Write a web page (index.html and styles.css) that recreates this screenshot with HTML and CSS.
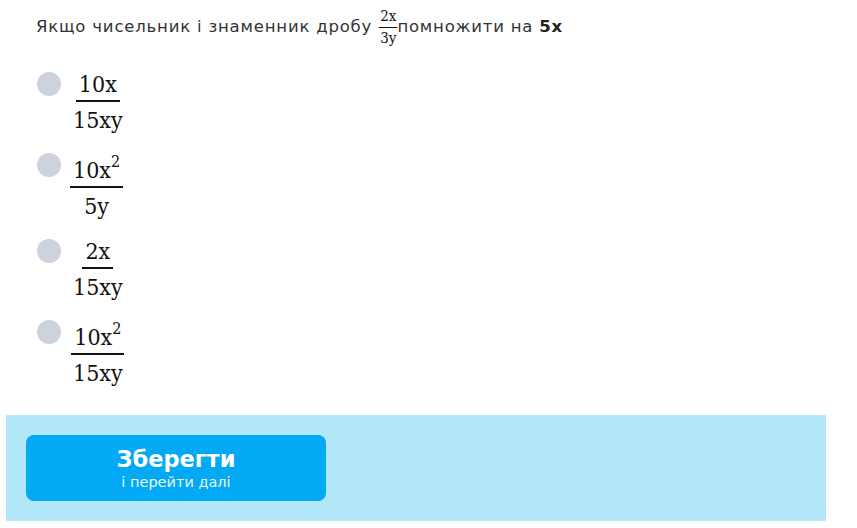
FILE: index.html
```html
<!DOCTYPE html>
<html lang="uk">
<head>
  <meta charset="UTF-8" />
  <meta name="viewport" content="width=device-width, initial-scale=1" />
  <title>Тест</title>
  <link rel="stylesheet" href="styles.css">
</head>
<body>
  <div class="card">
    <div class="question">
      Якщо чисельник і знаменник дробу
      <span class="frac small"><span class="num">2x</span><span class="den">3y</span></span>помножити на <b>5x</b>
    </div>

    <div class="answers">
      <label class="answer">
        <span class="radio"></span>
        <span class="frac"><span class="num">10x</span><span class="den">15xy</span></span>
      </label>
      <label class="answer">
        <span class="radio"></span>
        <span class="frac"><span class="num">10x<sup>2</sup></span><span class="den">5y</span></span>
      </label>
      <label class="answer">
        <span class="radio"></span>
        <span class="frac"><span class="num">2x</span><span class="den">15xy</span></span>
      </label>
      <label class="answer">
        <span class="radio"></span>
        <span class="frac"><span class="num">10x<sup>2</sup></span><span class="den">15xy</span></span>
      </label>
    </div>

    <div class="footer">
      <button class="save">
        <span class="save-title">Зберегти</span>
        <span class="save-sub">і перейти далі</span>
      </button>
    </div>
  </div>
</body>
</html>
```

FILE: styles.css
```css
body {
  margin: 0 31px 7px 6px;
  background-color: #fff;
  font-family: 'DejaVu Sans', sans-serif;
  color: #333;
}
.card {
  width: 820px;
  background-color: #fff;
  box-shadow: 0 0 22px rgba(3, 169, 244, 0.16);
}
.question {
  padding: 8px 30px 0 30px;
  font-size: 16.5px;
  line-height: 24px;
  letter-spacing: 0.8px;
}
.question b {
  font-weight: 700;
  color: #222;
}
.frac {
  display: inline-flex;
  flex-direction: column;
  align-items: center;
  font-family: 'DejaVu Serif Condensed', 'Liberation Serif', serif;
  font-size: 23px;
  line-height: 24px;
  letter-spacing: 0;
  color: #111;
}
.frac .num {
  padding: 0 3px 4px;
  border-bottom: 2px solid #111;
}
.frac .den {
  padding: 6px 3px 0;
}
.frac sup {
  font-size: 16px;
  line-height: 18px;
  vertical-align: 11px;
}
.frac.small {
  font-size: 15px;
  line-height: 16px;
  vertical-align: middle;
  margin-left: 1px;
}
.frac.small .num {
  padding: 0 1px 3px;
  border-bottom-width: 1px;
}
.frac.small .den {
  padding: 2px 1px 0;
}
.answers {
  display: flex;
  flex-direction: column;
  gap: 21px;
  padding: 26px 31px 30px;
}
.answer {
  display: flex;
  align-items: flex-start;
  gap: 9px;
  cursor: pointer;
}
.radio {
  width: 24px;
  height: 24px;
  border-radius: 50%;
  background-color: #ccd3dc;
  flex-shrink: 0;
}
.footer {
  background-color: #b3e8fb;
  padding: 20px;
}
.save {
  width: 300px;
  height: 66px;
  display: flex;
  flex-direction: column;
  align-items: center;
  justify-content: center;
  gap: 4px;
  padding: 2px 0 0;
  border: none;
  border-radius: 8px;
  background-color: #03a9f4;
  color: #fff;
  font-family: 'DejaVu Sans', sans-serif;
  cursor: pointer;
}
.save-title {
  font-size: 22.5px;
  font-weight: 700;
  line-height: 22px;
}
.save-sub {
  font-size: 14.5px;
  line-height: 16px;
  color: #e8f7fe;
}
```
